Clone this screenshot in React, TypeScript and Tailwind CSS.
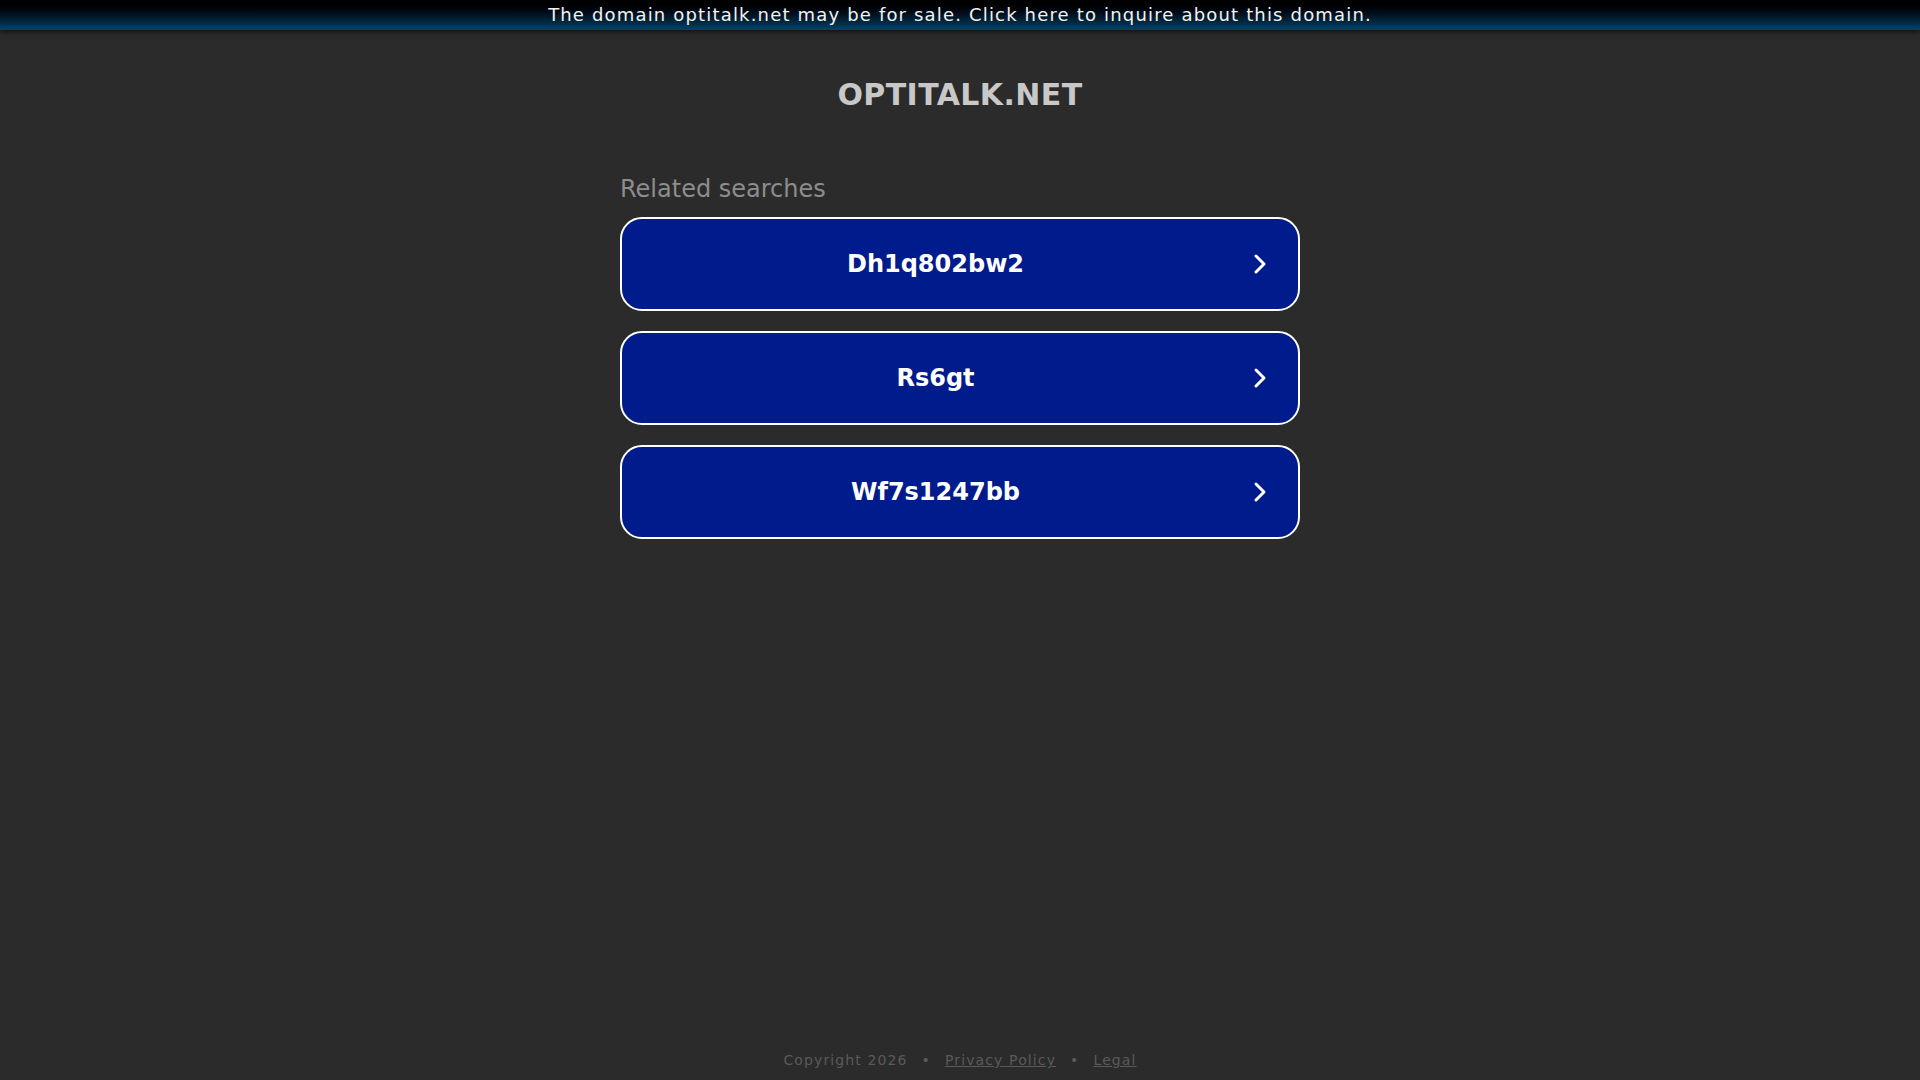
const font = { fontFamily: '"DejaVu Sans", Verdana, sans-serif' }

const searches = ['Dh1q802bw2', 'Rs6gt', 'Wf7s1247bb']

function Chevron() {
  return (
    <svg width="14" height="22" viewBox="0 0 14 22" fill="none" className="shrink-0">
      <polyline points="3,3 11,11 3,19" stroke="white" strokeWidth="3" strokeLinecap="round" strokeLinejoin="round" />
    </svg>
  )
}

export default function App() {
  return (
    <div className="min-h-screen h-[1080px] flex flex-col bg-[#2b2b2b]" style={font}>
      <div className="h-[30px] bg-gradient-to-b from-black to-[#034266] shadow-[0_2px_5px_rgba(0,0,0,0.6)] flex items-center justify-center">
        <span className="text-[18px] leading-none tracking-[0.065em] text-[#f2f2f2]">
          The domain optitalk.net may be for sale. Click here to inquire about this domain.
        </span>
      </div>

      <h1 className="mt-[47px] text-center text-[30px] leading-[36px] font-bold tracking-[0.4px] text-[#c8c8c8]">
        OPTITALK.NET
      </h1>

      <div className="w-[680px] mx-auto mt-[62px]">
        <p className="text-[24px] leading-[28px] text-[#8d8d8d] mb-[14px]">Related searches</p>
        <div className="flex flex-col gap-[20px]">
          {searches.map(s => (
            <a
              key={s}
              href="#"
              className="h-[94px] flex items-center gap-[4px] rounded-[22px] border-2 border-white bg-[#001b8b] text-white"
            >
              <span className="flex-1 text-center text-[24px] font-bold">{s}</span>
              <span className="mr-[31px] flex"><Chevron /></span>
            </a>
          ))}
        </div>
      </div>

      <footer className="mt-auto pb-[10px] flex items-center justify-center gap-[14px] text-[14px] leading-[20px] tracking-[0.08em] text-[#5a5a5a]">
        <span>Copyright 2026</span>
        <span>•</span>
        <a href="#" className="underline">Privacy Policy</a>
        <span>•</span>
        <a href="#" className="underline">Legal</a>
      </footer>
    </div>
  )
}
